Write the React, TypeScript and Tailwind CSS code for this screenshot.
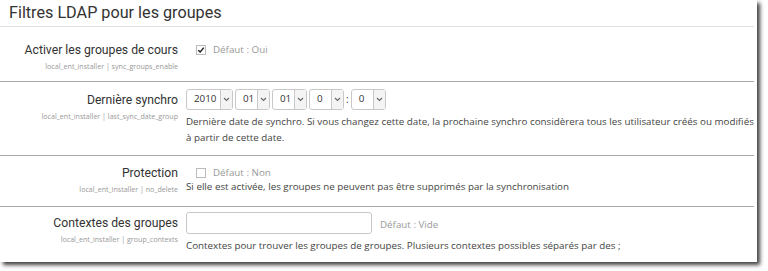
import React from "react";

const roboto = { fontFamily: "Roboto, 'Liberation Sans', sans-serif" };
const open = { fontFamily: "'Open Sans', 'Liberation Sans', sans-serif" };

function Chevron() {
  return (
    <svg width="7" height="5" viewBox="0 0 7 5" className="block">
      <path d="M1 1 L3.5 3.5 L6 1" fill="none" stroke="#666" strokeWidth="1.1" />
    </svg>
  );
}

function Sel({ v, w }: { v: string; w: string }) {
  return (
    <div className={`flex h-[21px] ${w} items-stretch rounded-[3px] border border-[#c8c8c8] bg-white`}>
      <div className="flex flex-1 items-center pl-[7px] text-[9.8px] text-[#333]" style={open}>
        {v}
      </div>
      <div className="flex w-[12px] items-center justify-center border-l border-[#c8c8c8] bg-[#f4f4f4]">
        <Chevron />
      </div>
    </div>
  );
}

function Label({ title, sub, pt }: { title: string; sub: string; pt: string }) {
  return (
    <div className={`flex w-[186px] shrink-0 flex-col items-end pr-[8px] ${pt}`}>
      <div className="text-[12.2px] leading-[16px] text-[#333]" style={roboto}>
        {title}
      </div>
      <div className="mt-[3px] text-[7.1px] leading-[10px] text-[#999]" style={open}>
        {sub}
      </div>
    </div>
  );
}

function Check({ checked }: { checked: boolean }) {
  return (
    <div className="flex h-[10px] w-[10px] items-center justify-center border border-[#bbb] bg-white">
      {checked && (
        <svg width="8" height="8" viewBox="0 0 8 8">
          <path d="M1.2 4.2 L3.2 6 L6.8 1.6" fill="none" stroke="#222" strokeWidth="1.5" />
        </svg>
      )}
    </div>
  );
}

export default function App() {
  return (
    <div className="h-[271px] w-[768px] overflow-hidden bg-white">
      <div className="h-[262px] w-[757px] bg-white pr-[3px] shadow-[3px_3px_4px_rgba(0,0,0,0.75)]">
        <div className="h-[26px] pl-[9px] pt-[2px] text-[16.2px] leading-[22px] text-[#333]" style={roboto}>
          Filtres LDAP pour les groupes
        </div>
        <div className="h-px bg-[#e2e2e2]" />

        {/* Row 1 */}
        <div className="flex h-[54px]">
          <Label title="Activer les groupes de cours" sub="local_ent_installer | sync_groups_enable" pt="pt-[15px]" />
          <div className="flex items-start pl-[10px] pt-[18px]">
            <Check checked />
            <span className="ml-[7px] -mt-[3px] text-[9.8px] leading-[16px] text-[#999]" style={open}>
              Défaut : Oui
            </span>
          </div>
        </div>
        <div className="h-px bg-[#a8a8a8]" />

        {/* Row 2 */}
        <div className="flex h-[73px]">
          <Label title="Dernière synchro" sub="local_ent_installer | last_sync_date_group" pt="pt-[10px]" />
          <div className="flex min-w-0 flex-col pt-[7px]">
            <div className="flex items-center gap-[2px]">
              <Sel v="2010" w="w-[47px]" />
              <Sel v="01" w="w-[35px]" />
              <Sel v="01" w="w-[35px]" />
              <Sel v="0" w="w-[35px]" />
              <span className="text-[10px] text-[#333]" style={open}>:</span>
              <Sel v="0" w="w-[35px]" />
            </div>
            <div className="mt-[4px] whitespace-nowrap text-[9.8px] leading-[16px] text-[#444]" style={open}>
              Dernière date de synchro. Si vous changez cette date, la prochaine synchro considèrera tous les utilisateur créés ou modifiés
              <br />à partir de cette date.
            </div>
          </div>
        </div>
        <div className="h-px bg-[#a8a8a8]" />

        {/* Row 3 */}
        <div className="flex h-[50px]">
          <Label title="Protection" sub="local_ent_installer | no_delete" pt="pt-[9px]" />
          <div className="flex flex-col pl-[10px] pt-[12px]">
            <div className="flex items-start">
              <Check checked={false} />
              <span className="ml-[7px] -mt-[3px] text-[9.8px] leading-[16px] text-[#999]" style={open}>
                Défaut : Non
              </span>
            </div>
            <div className="-ml-[10px] -mt-[2px] text-[9.8px] leading-[16px] text-[#444]" style={open}>
              Si elle est activée, les groupes ne peuvent pas être supprimés par la synchronisation
            </div>
          </div>
        </div>
        <div className="h-px bg-[#a8a8a8]" />

        {/* Row 4 */}
        <div className="flex h-[55px]">
          <Label title="Contextes des groupes" sub="local_ent_installer | group_contexts" pt="pt-[8px]" />
          <div className="flex flex-col pt-[5px]">
            <div className="flex items-center">
              <div className="h-[22px] w-[186px] rounded-[3px] border border-[#c8c8c8] bg-white" />
              <span className="ml-[8px] mt-[4px] text-[9.8px] text-[#999]" style={open}>
                Défaut : Vide
              </span>
            </div>
            <div className="mt-[4px] text-[9.8px] leading-[16px] text-[#444]" style={open}>
              Contextes pour trouver les groupes de groupes. Plusieurs contextes possibles séparés par des ;
            </div>
          </div>
        </div>
      </div>
    </div>
  );
}
